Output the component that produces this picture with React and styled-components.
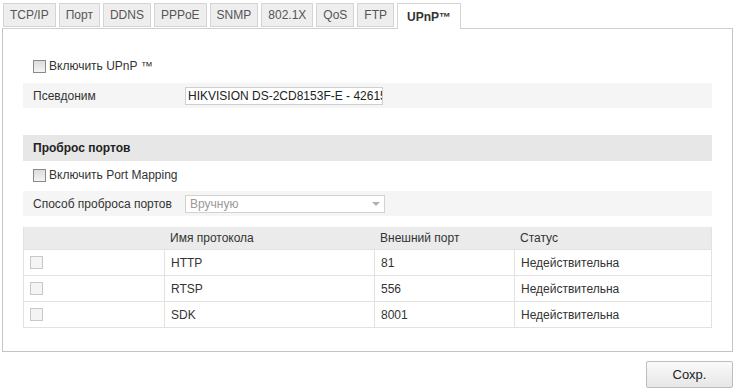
import React from 'react';
import styled, { createGlobalStyle } from 'styled-components';

const GlobalStyle = createGlobalStyle`
    body {
        margin: 0;
        background: #fff;
        font-family: "Liberation Sans", Arial, sans-serif;
        font-size: 12px;
        color: #333;
    }
`;

const Page = styled.div`
    width: 742px;
    height: 392px;
    padding: 3px 9px 0 2px;
    box-sizing: border-box;
`;

const Tabs = styled.div`
    display: flex;
    gap: 3px;
    padding-left: 1px;
    height: 25px;
    position: relative;
    z-index: 1;
`;

const Tab = styled.div`
    height: ${p => (p.$active ? '26px' : '24px')};
    padding: 0 ${p => p.$pad || 6}px;
    display: flex;
    align-items: center;
    border: 1px solid #d4d4d4;
    border-bottom: ${p => (p.$active ? 'none' : '1px solid #d4d4d4')};
    background: ${p => (p.$active ? '#fff' : '#eeeeee')};
    color: ${p => (p.$active ? '#333' : '#555')};
    font-weight: ${p => (p.$active ? 'bold' : 'normal')};
    font-size: 12px;
    box-sizing: border-box;
`;

const Panel = styled.div`
    border: 1px solid #c4c4c4;
    border-top-color: #d0d0d0;
    height: 324px;
    box-sizing: border-box;
    padding: 26px 20px 0 20px;
`;

const CheckRow = styled.label`
    display: flex;
    align-items: center;
    gap: 3px;
    height: 22px;
    padding-left: 10px;
    margin-top: ${p => p.$mt || 0}px;
    color: #333;
`;

const Box = styled.span`
    width: 11px;
    height: 11px;
    border: 1px solid ${p => (p.$light ? '#c8c8c8' : '#8a8a8a')};
    background: ${p => (p.$light ? '#f4f4f4' : 'linear-gradient(#dcdcdc, #f4f4f4)')};
    display: inline-block;
`;

const FieldRow = styled.div`
    display: flex;
    align-items: center;
    height: 25px;
    background: #f5f5f5;
    padding-left: 10px;
    margin-top: ${p => p.$mt || 0}px;
`;

const FieldLabel = styled.div`
    width: 152px;
`;

const TextInput = styled.div`
    width: 198px;
    height: 18px;
    border: 1px solid #cfcfcf;
    background: #fff;
    box-sizing: border-box;
    padding-left: 2px;
    display: flex;
    align-items: center;
    overflow: hidden;
    white-space: nowrap;
    color: #222;
`;

const Select = styled.div`
    width: 200px;
    height: 18px;
    border: 1px solid #d2d2d2;
    background: #fff;
    box-sizing: border-box;
    display: flex;
    align-items: center;
    justify-content: space-between;
    padding: 0 4px;
    color: #999;
`;

const Caret = styled.span`
    width: 0;
    height: 0;
    border-left: 4px solid transparent;
    border-right: 4px solid transparent;
    border-top: 4px solid #b0b0b0;
`;

const SectionHead = styled.div`
    height: 26px;
    background: #e7e7e7;
    display: flex;
    align-items: center;
    padding-left: 10px;
    font-weight: bold;
    margin-top: 27px;
    color: #222;
`;

const Table = styled.div`
    margin-top: 11px;
    border: 1px solid #e2e2e2;
    border-top: none;
`;

const TRow = styled.div`
    display: grid;
    grid-template-columns: 140px 210px 140px 1fr;
    height: ${p => (p.$head ? '22px' : '25px')};
    background: ${p => (p.$head ? '#ebebeb' : '#fff')};
    border-top: ${p => (p.$head ? 'none' : '1px solid #e2e2e2')};
`;

const Cell = styled.div`
    display: flex;
    align-items: center;
    padding-left: 6px;
    border-left: ${p => (p.$first || p.$head ? 'none' : '1px solid #e2e2e2')};
`;

const Footer = styled.div`
    display: flex;
    justify-content: flex-end;
    padding-top: 9px;
`;

const Button = styled.button`
    width: 87px;
    height: 27px;
    border: 1px solid #bdbdbd;
    border-radius: 2px;
    background: linear-gradient(#fafafa, #e6e6e6);
    font-family: "Liberation Sans", Arial, sans-serif;
    font-size: 13px;
    color: #222;
`;

const tabs = ['TCP/IP', 'Порт', 'DDNS', 'PPPoE', 'SNMP', '802.1X', 'QoS', 'FTP'];

const rows = [
    ['HTTP', '81'],
    ['RTSP', '556'],
    ['SDK', '8001'],
];

const App = () => {
    return (
        <Page>
            <GlobalStyle />
            <Tabs>
                {tabs.map(t => (
                    <Tab key={t}>{t}</Tab>
                ))}
                <Tab $active $pad={9}>UPnP™</Tab>
            </Tabs>
            <Panel>
                <CheckRow>
                    <Box />
                    Включить UPnP ™
                </CheckRow>
                <FieldRow $mt={6}>
                    <FieldLabel>Псевдоним</FieldLabel>
                    <TextInput>HIKVISION DS-2CD8153F-E - 42615</TextInput>
                </FieldRow>

                <SectionHead>Проброс портов</SectionHead>
                <CheckRow $mt={3}>
                    <Box />
                    Включить Port Mapping
                </CheckRow>
                <FieldRow $mt={5}>
                    <FieldLabel>Способ проброса портов</FieldLabel>
                    <Select>
                        Вручную
                        <Caret />
                    </Select>
                </FieldRow>

                <Table>
                    <TRow $head>
                        <Cell $head></Cell>
                        <Cell $head>Имя протокола</Cell>
                        <Cell $head>Внешний порт</Cell>
                        <Cell $head>Статус</Cell>
                    </TRow>
                    {rows.map(([name, port]) => (
                        <TRow key={name}>
                            <Cell $first><Box $light /></Cell>
                            <Cell>{name}</Cell>
                            <Cell>{port}</Cell>
                            <Cell>Недействительна</Cell>
                        </TRow>
                    ))}
                </Table>
            </Panel>
            <Footer>
                <Button>Сохр.</Button>
            </Footer>
        </Page>
    );
};

export default App;
